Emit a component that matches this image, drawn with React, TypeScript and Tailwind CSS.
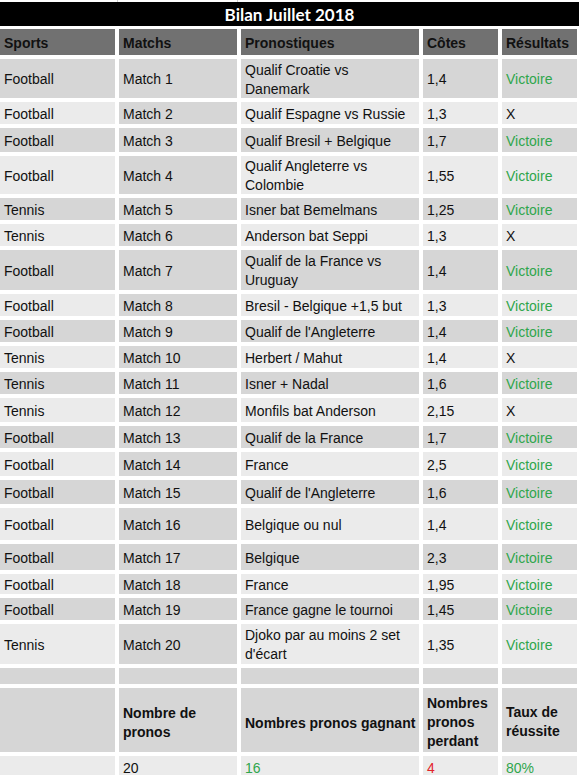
import React from "react";

type Row = [string, string, string[], string, string];

const rows: Row[] = [
  ["Football", "Match 1", ["Qualif Croatie vs", "Danemark"], "1,4", "Victoire"],
  ["Football", "Match 2", ["Qualif Espagne vs Russie"], "1,3", "X"],
  ["Football", "Match 3", ["Qualif Bresil + Belgique"], "1,7", "Victoire"],
  ["Football", "Match 4", ["Qualif Angleterre vs", "Colombie"], "1,55", "Victoire"],
  ["Tennis", "Match 5", ["Isner bat Bemelmans"], "1,25", "Victoire"],
  ["Tennis", "Match 6", ["Anderson bat Seppi"], "1,3", "X"],
  ["Football", "Match 7", ["Qualif de la France vs", "Uruguay"], "1,4", "Victoire"],
  ["Football", "Match 8", ["Bresil - Belgique +1,5 but"], "1,3", "Victoire"],
  ["Football", "Match 9", ["Qualif de l'Angleterre"], "1,4", "Victoire"],
  ["Tennis", "Match 10", ["Herbert / Mahut"], "1,4", "X"],
  ["Tennis", "Match 11", ["Isner + Nadal"], "1,6", "Victoire"],
  ["Tennis", "Match 12", ["Monfils bat Anderson"], "2,15", "X"],
  ["Football", "Match 13", ["Qualif de la France"], "1,7", "Victoire"],
  ["Football", "Match 14", ["France"], "2,5", "Victoire"],
  ["Football", "Match 15", ["Qualif de l'Angleterre"], "1,6", "Victoire"],
  ["Football", "Match 16", ["Belgique ou nul"], "1,4", "Victoire"],
  ["Football", "Match 17", ["Belgique"], "2,3", "Victoire"],
  ["Football", "Match 18", ["France"], "1,95", "Victoire"],
  ["Football", "Match 19", ["France gagne le tournoi"], "1,45", "Victoire"],
  ["Tennis", "Match 20", ["Djoko par au moins 2 set", "d'écart"], "1,35", "Victoire"],
];

const DARK = "bg-[#d6d6d6]";
const LIGHT = "bg-[#ebebeb]";

function Cell({
  bg,
  children,
  className = "",
}: {
  bg: string;
  children?: React.ReactNode;
  className?: string;
}) {
  return (
    <div className={`${bg} flex items-center pl-[4px] pr-[2px] pt-[2px] overflow-hidden ${className}`}>
      <div className="leading-[19px]">{children}</div>
    </div>
  );
}

function Lines({ lines }: { lines: string[] }) {
  return (
    <>
      {lines.map((l, i) => (
        <div key={i} className="whitespace-nowrap">
          {l}
        </div>
      ))}
    </>
  );
}

export default function App() {
  return (
    <div className="w-[580px] h-[775px] overflow-hidden bg-white text-[14px] text-[#111] font-['Liberation_Sans',Arial,sans-serif]">
      <div className="h-[2px] flex">
        <div className="w-[118px] border-r border-[#cfcfcf]" />
        <div className="w-[120px] border-r border-[#cfcfcf]" />
      </div>
      <div className="h-[24px] w-[579px] bg-black text-white flex items-center justify-center font-['Lato',sans-serif] font-bold text-[17px] leading-none">
        Bilan Juillet 2018
      </div>
      <div className="mt-[3px] grid grid-cols-[115px_118px_178px_75px_75px] gap-x-[4px] gap-y-[4px] grid-rows-[26px_39px_22px_24px_38px_22px_22px_40px_22px_22px_22px_22px_24px_22px_24px_24px_32px_26px_20px_22px_40px_16px_64px_22px]">
        {["Sports", "Matchs", "Pronostiques", "Côtes", "Résultats"].map((h) => (
          <Cell key={h} bg="bg-[#717171]" className="font-bold">
            {h}
          </Cell>
        ))}
        {rows.map((r, i) => {
          const bg = i % 2 === 0 ? DARK : LIGHT;
          const win = r[4] === "Victoire";
          return (
            <React.Fragment key={i}>
              <Cell bg={bg}>{r[0]}</Cell>
              <Cell bg={DARK} className="pl-[3px]">{r[1]}</Cell>
              <Cell bg={bg} className="pl-[3px]">
                <Lines lines={r[2]} />
              </Cell>
              <Cell bg={bg} className="pl-[3px]">{r[3]}</Cell>
              <Cell bg={bg}>
                <span className={win ? "text-[#2fa64c]" : "text-[#111]"}>{r[4]}</span>
              </Cell>
            </React.Fragment>
          );
        })}
        <Cell bg={DARK} />
        <Cell bg={DARK} />
        <Cell bg={DARK} />
        <Cell bg={DARK} />
        <Cell bg={DARK} />

        <Cell bg={DARK} />
        <Cell bg={DARK} className="font-bold pl-[3px] pt-[6px]">
          <Lines lines={["Nombre de", "pronos"]} />
        </Cell>
        <Cell bg={DARK} className="font-bold pl-[3px] pt-[6px]">
          <Lines lines={["Nombres pronos gagnant"]} />
        </Cell>
        <Cell bg={DARK} className="font-bold pl-[3px] pt-[4px]">
          <Lines lines={["Nombres", "pronos", "perdant"]} />
        </Cell>
        <Cell bg={DARK} className="font-bold pt-[4px]">
          <Lines lines={["Taux de", "réussite"]} />
        </Cell>

        <Cell bg={LIGHT} />
        <Cell bg={LIGHT} className="pl-[3px]">20</Cell>
        <Cell bg={LIGHT} className="pl-[3px]">
          <span className="text-[#2fa64c]">16</span>
        </Cell>
        <Cell bg={LIGHT} className="pl-[3px]">
          <span className="text-[#e3242b]">4</span>
        </Cell>
        <Cell bg={LIGHT}>
          <span className="text-[#2fa64c]">80%</span>
        </Cell>
      </div>
    </div>
  );
}
